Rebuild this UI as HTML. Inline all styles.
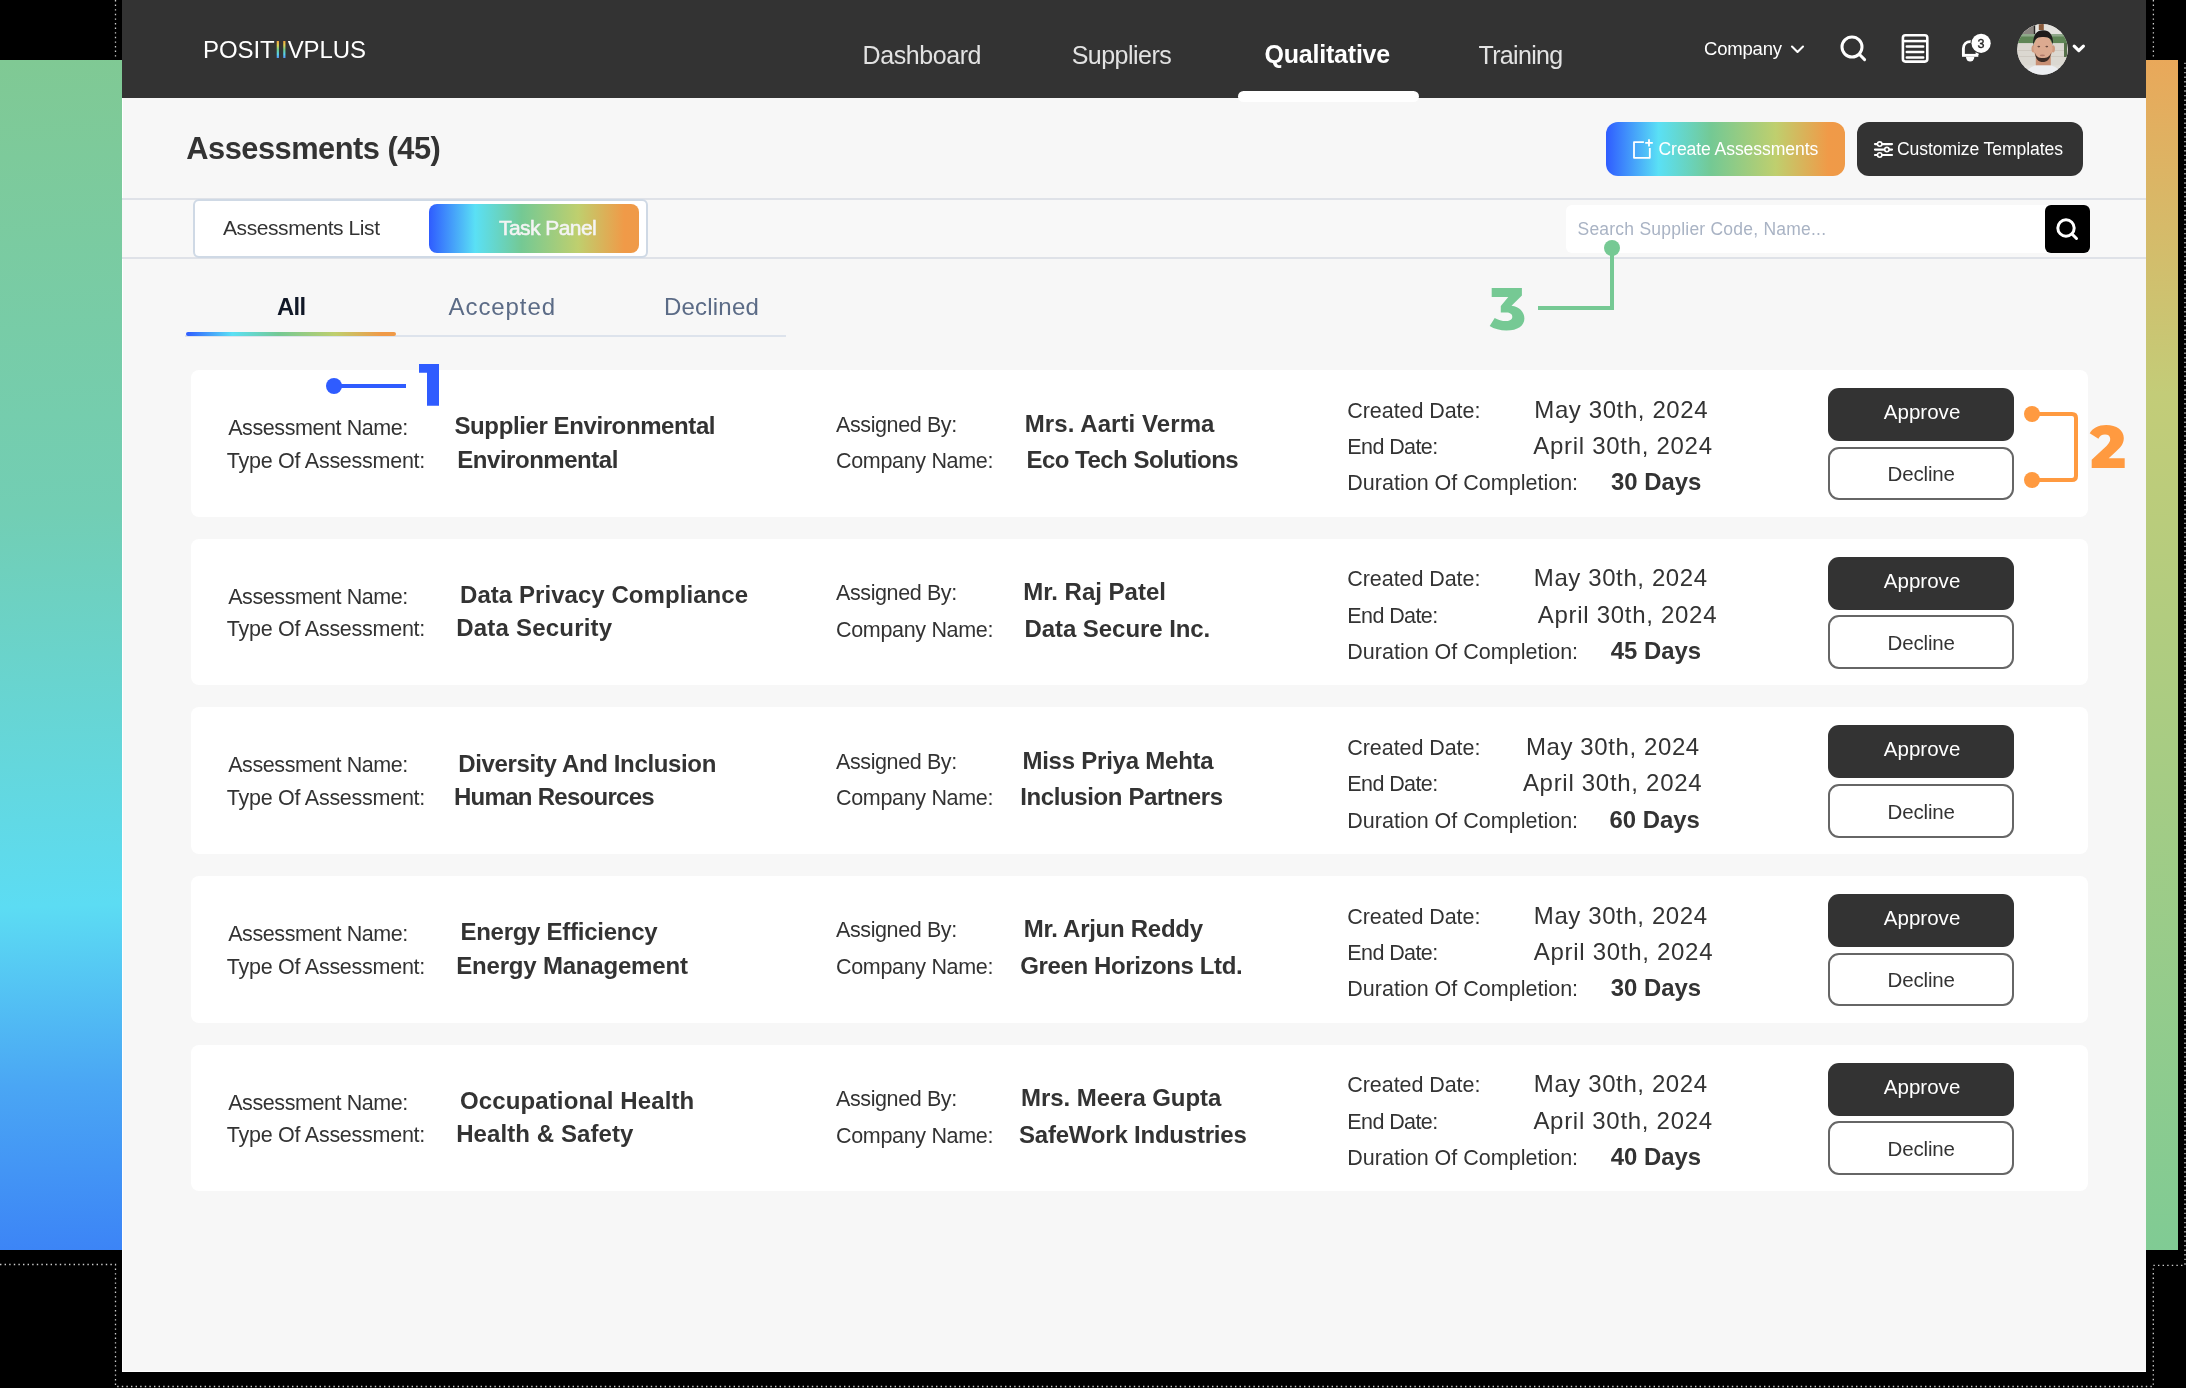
<!DOCTYPE html>
<html><head><meta charset="utf-8"><style>
html,body{margin:0;padding:0}
body{width:2186px;height:1388px;position:relative;overflow:hidden;background:#000;font-family:"Liberation Sans",sans-serif}
.t{position:absolute;white-space:nowrap;line-height:1;font-family:"Liberation Sans",sans-serif}
.ii{background:linear-gradient(180deg,#f5a33c 18%,#e0d050 34%,#74cf8c 50%,#55d0f0 68%,#5a7cf5 86%);-webkit-background-clip:text;background-clip:text;color:transparent}
</style></head><body><div style="position:absolute;left:0;top:0;width:2186px;height:1388px;will-change:transform">
<div style="position:absolute;left:0px;top:60px;width:122px;height:1190px;background:linear-gradient(178deg,#80c994 0%,#72ceb4 38%,#5cdcf3 71%,#4aa6f4 86%,#3c84f6 100%)"></div>
<div style="position:absolute;left:2146px;top:60px;width:32px;height:1190px;background:linear-gradient(180deg,#e9a85a 0%,#c3cc78 28%,#a6cc84 60%,#80cb94 100%)"></div>
<svg style="position:absolute;left:0;top:0" width="2186" height="1388">
<path d="M115.5 0 V59 M0 1264.5 H115.5 V1386.5 H2153.3 V1265.3 H2185 V61 M2153.4 0 V59" fill="none" stroke="#fff" stroke-width="1.3" stroke-dasharray="1.4 3.2" opacity="0.8"/>
</svg>
<div style="position:absolute;left:122px;top:0px;width:2024px;height:1372px;background:#f7f7f7"></div>
<div style="position:absolute;left:122px;top:98px;width:1px;height:1274px;background:#fff"></div>
<div style="position:absolute;left:122px;top:1371px;width:2024px;height:1px;background:#fff"></div>
<div style="position:absolute;left:122px;top:0px;width:2024px;height:98px;background:#333333"></div>
<div class="t" style="left:203px;top:38.00px;font-size:24px;color:#fff;letter-spacing:-0.1px">POSIT<span class="ii">I</span><span class="ii">I</span>VPLUS</div>
<div class="t" style="left:862.5px;top:43.00px;font-size:25px;color:#e2e2e2;letter-spacing:-0.413px;">Dashboard</div>
<div class="t" style="left:1071.7px;top:43.00px;font-size:25px;color:#e2e2e2;letter-spacing:-0.529px;">Suppliers</div>
<div class="t" style="left:1264.6px;top:42.00px;font-size:25px;color:#ffffff;font-weight:700;letter-spacing:-0.222px;">Qualitative</div>
<div class="t" style="left:1478.5px;top:43.00px;font-size:25px;color:#e2e2e2;letter-spacing:-0.671px;">Training</div>
<div style="position:absolute;left:1238px;top:91px;width:181px;height:11px;background:#fff;border-radius:6px"></div>
<div class="t" style="left:1704.0px;top:40.00px;font-size:18.5px;color:#ffffff;letter-spacing:-0.196px;">Company</div>
<svg style="position:absolute;left:0;top:0" width="2186" height="120">
<path d="M1792 46.6 L1797.5 52 L1803 46.6" fill="none" stroke="#fff" stroke-width="2.1" stroke-linecap="round" stroke-linejoin="round"/>
<circle cx="1852" cy="47" r="10" fill="none" stroke="#fff" stroke-width="3"/>
<path d="M1859.3 54.3 L1864.6 59.6" stroke="#fff" stroke-width="3" stroke-linecap="round"/>
<rect x="1902.9" y="35.3" width="24.4" height="26.3" rx="2.5" fill="none" stroke="#fff" stroke-width="2.6"/>
<path d="M1903 41.1 H1927" stroke="#fff" stroke-width="2.5"/><path d="M1906.8 46.6 H1923.2 M1906.8 52.1 H1923.2 M1906.8 57.4 H1923.2" stroke="#fff" stroke-width="2.5" stroke-linecap="round"/>
<path d="M1963.4 55 V48.6 C1963.4 44.2 1966.4 41.6 1970.3 41.6 C1974.2 41.6 1977.1 44.2 1977.1 48.6 V55" fill="none" stroke="#fff" stroke-width="2.9"/>
<rect x="1962" y="53.9" width="16.3" height="2.9" fill="#fff"/>
<path d="M1966 57 H1974.3 A4.15 4.6 0 0 1 1966 57 Z" fill="#fff"/>
<circle cx="1981.1" cy="43.3" r="10.6" fill="#333"/>
<circle cx="1981.1" cy="43.3" r="9.6" fill="#fff"/>
<text x="1980.9" y="47.9" font-family="Liberation Sans" font-size="12.6" text-anchor="middle" fill="#222" stroke="#222" stroke-width="0.35">3</text>
<path d="M2074.2 46.2 L2078.8 50.6 L2083.4 46.2" fill="none" stroke="#fff" stroke-width="3.2" stroke-linecap="round" stroke-linejoin="round"/>
</svg>
<svg style="position:absolute;left:2016.9px;top:23.7px" width="51" height="51" viewBox="0 0 51 51">
<defs><clipPath id="av"><circle cx="25.5" cy="25.4" r="25.3"/></clipPath></defs>
<g clip-path="url(#av)">
<rect width="51" height="51" fill="#e0ded9"/>
<rect x="0" y="0" width="51" height="10" fill="#e4e3df"/>
<rect x="6" y="1.3" width="11" height="8.7" fill="#8a8580"/>
<rect x="16.8" y="0" width="1.4" height="10" fill="#262322"/>
<rect x="21.8" y="0" width="5" height="6" fill="#8a5a3a"/>
<rect x="0" y="10" width="51" height="9.3" fill="#5f8656"/><rect x="0" y="10" width="51" height="2.5" fill="#8fa88a"/>
<rect x="0" y="19.3" width="51" height="22" fill="#dbd8d1"/>
<rect x="0" y="26" width="51" height="0.8" fill="#cbc6bd"/>
<rect x="0" y="32" width="51" height="0.8" fill="#cbc6bd"/>
<rect x="47" y="19" width="3" height="14" fill="#56704a"/>
<path d="M8 51 C10 44 17 40.5 26 40.5 C35 40.5 42 43 45 51 Z" fill="#eceef1"/>
<g transform="translate(-5.2,-3.7)">
<rect x="24" y="36" width="15" height="9" fill="#c88f74"/>
<ellipse cx="21.6" cy="28.5" rx="1.9" ry="3.6" fill="#cf9a7e"/>
<ellipse cx="41.3" cy="28.5" rx="1.9" ry="3.6" fill="#cf9a7e"/>
<ellipse cx="31.2" cy="28" rx="9.6" ry="13" fill="#dcaa90"/>
<path d="M21.4 26 C20.8 14 25 10 31.2 10 C37.4 10 41.8 14 41.2 25 C40.2 19 38 16.3 31.2 16.6 C24.6 16.3 22.4 19 21.4 26Z" fill="#1d1b1b"/>
<path d="M23 32 C23.8 39.5 27 41.8 31 41.8 C35 41.8 38.3 39.5 39.6 32 C38 36.5 35.3 37.8 31 37.8 C26.8 37.8 24.2 36.5 23 32Z" fill="#3e2d27"/>
<ellipse cx="27" cy="26.3" rx="1.4" ry="0.8" fill="#6a4a3e"/>
<ellipse cx="35" cy="26.3" rx="1.4" ry="0.8" fill="#6a4a3e"/>
<ellipse cx="30.6" cy="35" rx="2.6" ry="0.9" fill="#b27c6c"/>
</g>
</g></svg>
<div class="t" style="left:186.3px;top:134.00px;font-size:30.8px;color:#333333;font-weight:700;letter-spacing:-0.496px;">Assessments (45)</div>
<div style="position:absolute;left:1606px;top:122px;width:239px;height:53.5px;border-radius:12px;background:linear-gradient(90deg,#2f5cff 0%,#5ae0f5 22%,#74c994 44%,#bfcf6e 71%,#f09a48 93%,#ef9a48 100%)"></div>
<div style="position:absolute;left:1857px;top:122px;width:226px;height:53.5px;border-radius:12px;background:#333333"></div>
<div class="t" style="left:1658.5px;top:141.00px;font-size:17.6px;color:#ffffff;letter-spacing:-0.094px;">Create Assessments</div>
<div class="t" style="left:1897.0px;top:141.00px;font-size:17.6px;color:#ffffff;letter-spacing:-0.107px;">Customize Templates</div>
<svg style="position:absolute;left:0;top:110px" width="2186" height="70" viewBox="0 110 2186 70">
<path d="M1643.9 142.1 H1634 V157.8 H1649.8 V148" fill="none" stroke="#fff" stroke-width="1.8" stroke-linejoin="round"/>
<path d="M1649 139.2 V146.6 M1645.2 142.9 H1652.8" stroke="#fff" stroke-width="1.8"/>
<path d="M1875 144.1 H1892 M1875 149.6 H1892 M1875 155 H1892" stroke="#fff" stroke-width="2.2" stroke-linecap="round"/>
<circle cx="1879.7" cy="144.1" r="2.2" fill="#333" stroke="#fff" stroke-width="1.6"/>
<circle cx="1886.9" cy="149.6" r="2.2" fill="#333" stroke="#fff" stroke-width="1.6"/>
<circle cx="1879.7" cy="155" r="2.2" fill="#333" stroke="#fff" stroke-width="1.6"/>
</svg>
<div style="position:absolute;left:122px;top:198px;width:2024px;height:2px;background:#dfe2e8"></div>
<div style="position:absolute;left:122px;top:257px;width:2024px;height:2px;background:#dfe2e8"></div>
<div style="position:absolute;left:122px;top:200px;width:2024px;height:57px;background:#f8f8f8"></div>
<div style="position:absolute;left:192.5px;top:198.5px;width:451px;height:55.5px;background:#fff;border:2px solid #cfd9e5;border-radius:6px"></div>
<div style="position:absolute;left:428.7px;top:204px;width:210.5px;height:48.7px;border-radius:8px;background:linear-gradient(90deg,#2f5cff 0%,#5ae0f5 22%,#74c994 44%,#bfcf6e 71%,#f09a48 93%,#ef9a48 100%)"></div>
<div class="t" style="left:223.0px;top:217.00px;font-size:21px;color:#333333;letter-spacing:-0.426px;">Assessments List</div>
<div class="t" style="left:499.0px;top:217.00px;font-size:21px;color:#f4f4f4;letter-spacing:-0.558px;-webkit-text-stroke:0.55px #f4f4f4;">Task Panel</div>
<div style="position:absolute;left:1566px;top:205px;width:524px;height:47.7px;background:#fff;border-radius:6px"></div>
<div style="position:absolute;left:2045px;top:205px;width:45px;height:47.7px;background:#000;border-radius:6px"></div>
<svg style="position:absolute;left:2045px;top:205px" width="45" height="48" viewBox="0 0 45 48">
<circle cx="21" cy="23" r="8.2" fill="none" stroke="#fff" stroke-width="3"/>
<path d="M27 29 L31.5 33.5" stroke="#fff" stroke-width="3" stroke-linecap="round"/></svg>
<div class="t" style="left:1577.5px;top:221.00px;font-size:17.5px;color:#a9b3c4;letter-spacing:0.225px;">Search Supplier Code, Name...</div>
<div class="t" style="left:277.0px;top:295.00px;font-size:23.8px;color:#111827;font-weight:700;letter-spacing:-0.706px;">All</div>
<div class="t" style="left:448.6px;top:295.00px;font-size:24px;color:#5b6b86;letter-spacing:0.904px;">Accepted</div>
<div class="t" style="left:664.0px;top:295.00px;font-size:24px;color:#5b6b86;letter-spacing:0.201px;">Declined</div>
<div style="position:absolute;left:185px;top:335.2px;width:601px;height:1.5px;background:#dde3ec"></div>
<div style="position:absolute;left:185.5px;top:332px;width:210.5px;height:4px;border-radius:2px;background:linear-gradient(90deg,#2f5cff 0%,#5ae0f5 22%,#74c994 44%,#bfcf6e 71%,#f09a48 93%,#ef9a48 100%)"></div>
<div style="position:absolute;left:191px;top:370.00px;width:1897px;height:146.6px;background:#fff;border-radius:8px"></div>
<div class="t" style="left:228.2px;top:418.00px;font-size:21.5px;color:#333333;letter-spacing:-0.420px;">Assessment Name:</div>
<div class="t" style="left:226.8px;top:451.00px;font-size:21.5px;color:#333333;letter-spacing:-0.258px;">Type Of Assessment:</div>
<div class="t" style="left:454.5px;top:414.00px;font-size:24px;color:#333333;font-weight:700;letter-spacing:-0.399px;">Supplier Environmental</div>
<div class="t" style="left:457.3px;top:448.00px;font-size:24px;color:#333333;font-weight:700;letter-spacing:-0.475px;">Environmental</div>
<div class="t" style="left:836.0px;top:415.00px;font-size:21.5px;color:#333333;letter-spacing:-0.390px;">Assigned By:</div>
<div class="t" style="left:836.0px;top:451.00px;font-size:21.5px;color:#333333;letter-spacing:-0.326px;">Company Name:</div>
<div class="t" style="left:1024.8px;top:412.00px;font-size:24px;color:#333333;font-weight:700;letter-spacing:0.071px;">Mrs. Aarti Verma</div>
<div class="t" style="left:1026.4px;top:448.00px;font-size:24px;color:#333333;font-weight:700;letter-spacing:-0.507px;">Eco Tech Solutions</div>
<div class="t" style="left:1347.3px;top:401.00px;font-size:21.5px;color:#333333;letter-spacing:-0.063px;">Created Date:</div>
<div class="t" style="left:1347.3px;top:437.00px;font-size:21.5px;color:#333333;letter-spacing:-0.590px;">End Date:</div>
<div class="t" style="left:1347.3px;top:473.00px;font-size:21.5px;color:#333333;letter-spacing:0.007px;">Duration Of Completion:</div>
<div class="t" style="left:1534.3px;top:398.00px;font-size:24px;color:#333333;letter-spacing:0.604px;">May 30th, 2024</div>
<div class="t" style="left:1533.3px;top:434.00px;font-size:24px;color:#333333;letter-spacing:0.705px;">April 30th, 2024</div>
<div class="t" style="left:1611.0px;top:470.00px;font-size:23.9px;color:#333333;font-weight:700;">30 Days</div>
<div style="position:absolute;left:1828.4px;top:388.00px;width:185.6px;height:53px;background:#333;border-radius:11px"></div>
<div style="position:absolute;left:1828.3px;top:446.80px;width:182px;height:49.6px;background:#fff;border:2px solid #666;border-radius:11px"></div>
<div class="t" style="left:1883.8px;top:402.00px;font-size:20.5px;color:#ffffff;letter-spacing:0.024px;">Approve</div>
<div class="t" style="left:1887.5px;top:464.00px;font-size:20.5px;color:#333333;letter-spacing:-0.145px;">Decline</div>
<div style="position:absolute;left:191px;top:538.65px;width:1897px;height:146.6px;background:#fff;border-radius:8px"></div>
<div class="t" style="left:228.2px;top:587.00px;font-size:21.5px;color:#333333;letter-spacing:-0.420px;">Assessment Name:</div>
<div class="t" style="left:226.8px;top:619.00px;font-size:21.5px;color:#333333;letter-spacing:-0.258px;">Type Of Assessment:</div>
<div class="t" style="left:460.0px;top:583.00px;font-size:24px;color:#333333;font-weight:700;letter-spacing:0.055px;">Data Privacy Compliance</div>
<div class="t" style="left:456.2px;top:616.00px;font-size:24px;color:#333333;font-weight:700;letter-spacing:0.216px;">Data Security</div>
<div class="t" style="left:836.0px;top:583.00px;font-size:21.5px;color:#333333;letter-spacing:-0.390px;">Assigned By:</div>
<div class="t" style="left:836.0px;top:620.00px;font-size:21.5px;color:#333333;letter-spacing:-0.326px;">Company Name:</div>
<div class="t" style="left:1023.2px;top:580.00px;font-size:24px;color:#333333;font-weight:700;letter-spacing:0.006px;">Mr. Raj Patel</div>
<div class="t" style="left:1024.5px;top:617.00px;font-size:24px;color:#333333;font-weight:700;letter-spacing:-0.064px;">Data Secure Inc.</div>
<div class="t" style="left:1347.3px;top:569.00px;font-size:21.5px;color:#333333;letter-spacing:-0.063px;">Created Date:</div>
<div class="t" style="left:1347.3px;top:606.00px;font-size:21.5px;color:#333333;letter-spacing:-0.590px;">End Date:</div>
<div class="t" style="left:1347.3px;top:642.00px;font-size:21.5px;color:#333333;letter-spacing:0.007px;">Duration Of Completion:</div>
<div class="t" style="left:1533.8px;top:566.00px;font-size:24px;color:#333333;letter-spacing:0.604px;">May 30th, 2024</div>
<div class="t" style="left:1537.8px;top:603.00px;font-size:24px;color:#333333;letter-spacing:0.705px;">April 30th, 2024</div>
<div class="t" style="left:1610.8px;top:639.00px;font-size:23.9px;color:#333333;font-weight:700;">45 Days</div>
<div style="position:absolute;left:1828.4px;top:556.65px;width:185.6px;height:53px;background:#333;border-radius:11px"></div>
<div style="position:absolute;left:1828.3px;top:615.45px;width:182px;height:49.6px;background:#fff;border:2px solid #666;border-radius:11px"></div>
<div class="t" style="left:1883.8px;top:571.00px;font-size:20.5px;color:#ffffff;letter-spacing:0.024px;">Approve</div>
<div class="t" style="left:1887.5px;top:633.00px;font-size:20.5px;color:#333333;letter-spacing:-0.145px;">Decline</div>
<div style="position:absolute;left:191px;top:707.30px;width:1897px;height:146.6px;background:#fff;border-radius:8px"></div>
<div class="t" style="left:228.2px;top:755.00px;font-size:21.5px;color:#333333;letter-spacing:-0.420px;">Assessment Name:</div>
<div class="t" style="left:226.8px;top:788.00px;font-size:21.5px;color:#333333;letter-spacing:-0.258px;">Type Of Assessment:</div>
<div class="t" style="left:458.3px;top:752.00px;font-size:24px;color:#333333;font-weight:700;letter-spacing:-0.356px;">Diversity And Inclusion</div>
<div class="t" style="left:454.0px;top:785.00px;font-size:24px;color:#333333;font-weight:700;letter-spacing:-0.717px;">Human Resources</div>
<div class="t" style="left:836.0px;top:752.00px;font-size:21.5px;color:#333333;letter-spacing:-0.390px;">Assigned By:</div>
<div class="t" style="left:836.0px;top:788.00px;font-size:21.5px;color:#333333;letter-spacing:-0.326px;">Company Name:</div>
<div class="t" style="left:1022.4px;top:749.00px;font-size:24px;color:#333333;font-weight:700;letter-spacing:-0.230px;">Miss Priya Mehta</div>
<div class="t" style="left:1020.3px;top:785.00px;font-size:24px;color:#333333;font-weight:700;letter-spacing:-0.388px;">Inclusion Partners</div>
<div class="t" style="left:1347.3px;top:738.00px;font-size:21.5px;color:#333333;letter-spacing:-0.063px;">Created Date:</div>
<div class="t" style="left:1347.3px;top:774.00px;font-size:21.5px;color:#333333;letter-spacing:-0.590px;">End Date:</div>
<div class="t" style="left:1347.3px;top:811.00px;font-size:21.5px;color:#333333;letter-spacing:0.007px;">Duration Of Completion:</div>
<div class="t" style="left:1525.9px;top:735.00px;font-size:24px;color:#333333;letter-spacing:0.604px;">May 30th, 2024</div>
<div class="t" style="left:1522.9px;top:771.00px;font-size:24px;color:#333333;letter-spacing:0.705px;">April 30th, 2024</div>
<div class="t" style="left:1609.5px;top:808.00px;font-size:23.9px;color:#333333;font-weight:700;">60 Days</div>
<div style="position:absolute;left:1828.4px;top:725.30px;width:185.6px;height:53px;background:#333;border-radius:11px"></div>
<div style="position:absolute;left:1828.3px;top:784.10px;width:182px;height:49.6px;background:#fff;border:2px solid #666;border-radius:11px"></div>
<div class="t" style="left:1883.8px;top:739.00px;font-size:20.5px;color:#ffffff;letter-spacing:0.024px;">Approve</div>
<div class="t" style="left:1887.5px;top:802.00px;font-size:20.5px;color:#333333;letter-spacing:-0.145px;">Decline</div>
<div style="position:absolute;left:191px;top:875.95px;width:1897px;height:146.6px;background:#fff;border-radius:8px"></div>
<div class="t" style="left:228.2px;top:924.00px;font-size:21.5px;color:#333333;letter-spacing:-0.420px;">Assessment Name:</div>
<div class="t" style="left:226.8px;top:957.00px;font-size:21.5px;color:#333333;letter-spacing:-0.258px;">Type Of Assessment:</div>
<div class="t" style="left:460.4px;top:920.00px;font-size:24px;color:#333333;font-weight:700;letter-spacing:-0.257px;">Energy Efficiency</div>
<div class="t" style="left:456.2px;top:954.00px;font-size:24px;color:#333333;font-weight:700;letter-spacing:-0.190px;">Energy Management</div>
<div class="t" style="left:836.0px;top:920.00px;font-size:21.5px;color:#333333;letter-spacing:-0.390px;">Assigned By:</div>
<div class="t" style="left:836.0px;top:957.00px;font-size:21.5px;color:#333333;letter-spacing:-0.326px;">Company Name:</div>
<div class="t" style="left:1023.7px;top:917.00px;font-size:24px;color:#333333;font-weight:700;letter-spacing:-0.267px;">Mr. Arjun Reddy</div>
<div class="t" style="left:1020.3px;top:954.00px;font-size:24px;color:#333333;font-weight:700;letter-spacing:-0.392px;">Green Horizons Ltd.</div>
<div class="t" style="left:1347.3px;top:907.00px;font-size:21.5px;color:#333333;letter-spacing:-0.063px;">Created Date:</div>
<div class="t" style="left:1347.3px;top:943.00px;font-size:21.5px;color:#333333;letter-spacing:-0.590px;">End Date:</div>
<div class="t" style="left:1347.3px;top:979.00px;font-size:21.5px;color:#333333;letter-spacing:0.007px;">Duration Of Completion:</div>
<div class="t" style="left:1533.8px;top:904.00px;font-size:24px;color:#333333;letter-spacing:0.604px;">May 30th, 2024</div>
<div class="t" style="left:1533.8px;top:940.00px;font-size:24px;color:#333333;letter-spacing:0.705px;">April 30th, 2024</div>
<div class="t" style="left:1610.8px;top:976.00px;font-size:23.9px;color:#333333;font-weight:700;">30 Days</div>
<div style="position:absolute;left:1828.4px;top:893.95px;width:185.6px;height:53px;background:#333;border-radius:11px"></div>
<div style="position:absolute;left:1828.3px;top:952.75px;width:182px;height:49.6px;background:#fff;border:2px solid #666;border-radius:11px"></div>
<div class="t" style="left:1883.8px;top:908.00px;font-size:20.5px;color:#ffffff;letter-spacing:0.024px;">Approve</div>
<div class="t" style="left:1887.5px;top:970.00px;font-size:20.5px;color:#333333;letter-spacing:-0.145px;">Decline</div>
<div style="position:absolute;left:191px;top:1044.60px;width:1897px;height:146.6px;background:#fff;border-radius:8px"></div>
<div class="t" style="left:228.2px;top:1093.00px;font-size:21.5px;color:#333333;letter-spacing:-0.420px;">Assessment Name:</div>
<div class="t" style="left:226.8px;top:1125.00px;font-size:21.5px;color:#333333;letter-spacing:-0.258px;">Type Of Assessment:</div>
<div class="t" style="left:460.0px;top:1089.00px;font-size:24px;color:#333333;font-weight:700;letter-spacing:0.120px;">Occupational Health</div>
<div class="t" style="left:456.2px;top:1122.00px;font-size:24px;color:#333333;font-weight:700;letter-spacing:0.082px;">Health &amp; Safety</div>
<div class="t" style="left:836.0px;top:1089.00px;font-size:21.5px;color:#333333;letter-spacing:-0.390px;">Assigned By:</div>
<div class="t" style="left:836.0px;top:1126.00px;font-size:21.5px;color:#333333;letter-spacing:-0.326px;">Company Name:</div>
<div class="t" style="left:1021.1px;top:1086.00px;font-size:24px;color:#333333;font-weight:700;letter-spacing:-0.079px;">Mrs. Meera Gupta</div>
<div class="t" style="left:1019.0px;top:1123.00px;font-size:24px;color:#333333;font-weight:700;letter-spacing:-0.213px;">SafeWork Industries</div>
<div class="t" style="left:1347.3px;top:1075.00px;font-size:21.5px;color:#333333;letter-spacing:-0.063px;">Created Date:</div>
<div class="t" style="left:1347.3px;top:1112.00px;font-size:21.5px;color:#333333;letter-spacing:-0.590px;">End Date:</div>
<div class="t" style="left:1347.3px;top:1148.00px;font-size:21.5px;color:#333333;letter-spacing:0.007px;">Duration Of Completion:</div>
<div class="t" style="left:1533.8px;top:1072.00px;font-size:24px;color:#333333;letter-spacing:0.604px;">May 30th, 2024</div>
<div class="t" style="left:1533.4px;top:1109.00px;font-size:24px;color:#333333;letter-spacing:0.705px;">April 30th, 2024</div>
<div class="t" style="left:1610.8px;top:1145.00px;font-size:23.9px;color:#333333;font-weight:700;">40 Days</div>
<div style="position:absolute;left:1828.4px;top:1062.60px;width:185.6px;height:53px;background:#333;border-radius:11px"></div>
<div style="position:absolute;left:1828.3px;top:1121.40px;width:182px;height:49.6px;background:#fff;border:2px solid #666;border-radius:11px"></div>
<div class="t" style="left:1883.8px;top:1077.00px;font-size:20.5px;color:#ffffff;letter-spacing:0.024px;">Approve</div>
<div class="t" style="left:1887.5px;top:1139.00px;font-size:20.5px;color:#333333;letter-spacing:-0.145px;">Decline</div>
<svg style="position:absolute;left:0;top:0" width="2186" height="1388">
<circle cx="334" cy="386" r="8" fill="#2f5cff"/>
<rect x="334" y="384" width="72" height="4" fill="#2f5cff"/>
<path d="M419 364 H439 V405.8 H427 V372.8 H419 Z" fill="#2f5cff"/>
<circle cx="1612" cy="248" r="8" fill="#76c994"/>
<path d="M1612 248 V308 H1538" fill="none" stroke="#76c994" stroke-width="4"/>
<circle cx="2032" cy="414" r="8" fill="#ff9a40"/>
<circle cx="2032" cy="480" r="8" fill="#ff9a40"/>
<path d="M2032 414 H2072 Q2076 414 2076 418 V476 Q2076 480 2072 480 H2032" fill="none" stroke="#ff9a40" stroke-width="4"/>
</svg>
<svg style="position:absolute;left:0;top:0" width="2186" height="1388">
<path d="M1491.7 288 H1521.9 V295.5 L1511.5 305.8 C1519.5 307 1524.4 312 1524.4 318.5 C1524.4 325.5 1518 330.6 1506.3 330.6 C1500.5 330.6 1494 329 1489.7 326.1 L1494.7 318 C1498 320 1502 321.1 1506 321.1 C1510.3 321.1 1512.3 319.3 1512.3 316.8 C1512.3 314.2 1510.2 312.5 1506.3 312.5 H1500.8 V306 L1508.3 297 H1491.7 Z" fill="#76c994"/>
<path d="M2089.7 433.2 C2092.5 428 2098.5 424.9 2106.2 424.9 C2116.5 424.9 2123.8 430 2123.8 438 C2123.8 443.5 2121 447 2116 451.5 L2108.7 458.2 H2124.7 V468.1 H2091.7 V459.8 L2106.5 446 C2109.5 443 2110.2 441 2110.2 438.8 C2110.2 436 2108.2 434.5 2105 434.5 C2101.8 434.5 2099.6 436 2098.4 438.8 Z" fill="#ff9a40"/>
</svg>
</div></body></html>
